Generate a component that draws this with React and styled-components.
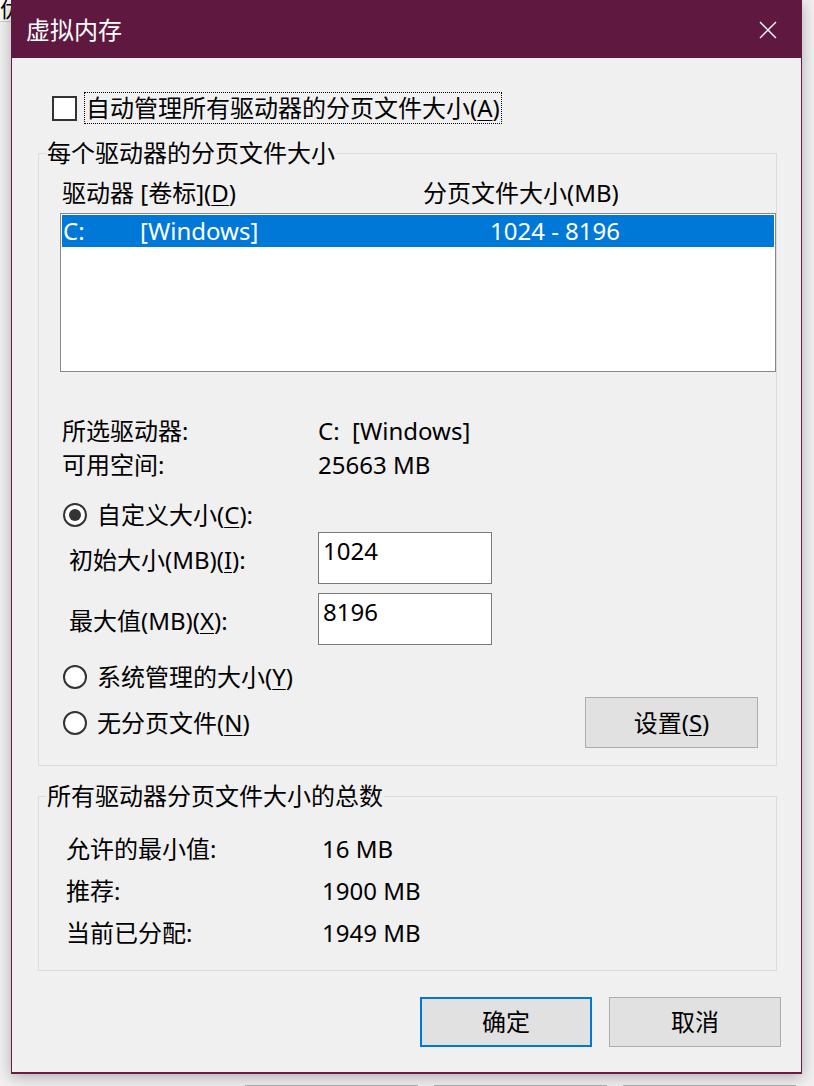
import React from 'react';
import styled, { createGlobalStyle } from 'styled-components';

// --- global ---
const GlobalStyle = createGlobalStyle`
  html, body { margin: 0; padding: 0; }
  body {
    background: #f0f0f0;
    font-family: "Noto Sans", "Noto Sans CJK SC", sans-serif;
    font-size: 24px;
    color: #000;
  }
`;

// --- backdrop (parent window peeking out) ---
const Page = styled.div`
  display: flex;
  width: 814px;
  height: 1086px;
  overflow: hidden;
  background: #f0f0f0;
`;

const BackStrip = styled.div`
  flex: none;
  width: 11px;
  overflow: hidden;
`;

const BackTab = styled.div`
  height: 21px;
  background: #fafafa;
  border-bottom: 1px solid #cccccc;
  font-size: 22px;
  line-height: 16px;
  white-space: nowrap;
  overflow: hidden;
`;

const Column = styled.div`
  display: flex;
  flex-direction: column;
`;

const BackButtons = styled.div`
  display: flex;
  gap: 16px;
  margin-top: 11px;
  padding-left: 234px;
`;

const BackButton = styled.div`
  width: 173px;
  height: 20px;
  box-sizing: border-box;
  border: 1px solid #adadad;
  background: #e1e1e1;
`;

// --- dialog ---
const Dialog = styled.div`
  position: relative;
  width: 791px;
  box-sizing: border-box;
  border: 1px solid #6a1b48;
  border-top: none;
  border-bottom-width: 2px;
  background: #f0f0f0;
  box-shadow: 0 3px 14px rgba(0, 0, 0, 0.28);
`;

const TitleBar = styled.div`
  display: flex;
  align-items: center;
  justify-content: space-between;
  height: 58px;
  margin: 0 -1px;
  padding: 0 25px 0 15px;
  background: #5f1840;
  color: #ffffff;
`;

const Title = styled.span`
  font-size: 24px;
  line-height: 32px;
  margin-top: 2px;
`;

const CloseIcon = styled.svg`
  display: block;
  width: 18px;
  height: 18px;
  margin-top: 1px;
`;

const Body = styled.div`
  padding: 34px 20px 25px 26px;
`;

const Underline = styled.u`
  text-decoration-thickness: 1px;
  text-underline-offset: 3px;
`;

// checkbox row
const CheckRow = styled.div`
  display: flex;
  align-items: center;
  height: 32px;
  margin-left: 14px;
`;

const CheckBox = styled.span`
  width: 25px;
  height: 25px;
  box-sizing: border-box;
  border: 2px solid #333333;
  background: #ffffff;
`;

const FocusLabel = styled.span`
  margin-left: 7px;
  padding: 0 1px;
  border: 1px dotted #000;
  line-height: 30px;
  white-space: nowrap;
`;

// group box
const Group = styled.fieldset`
  margin: ${p => p.$top}px 4px 0 0;
  padding: 0 0 ${p => p.$bottom}px 0;
  border: 1px solid #dcdcdc;
  min-width: 0;
`;

const Legend = styled.legend`
  margin-left: 7px;
  padding: 0 1px;
  line-height: 32px;
`;

const ColumnHeads = styled.div`
  display: grid;
  grid-template-columns: 361px auto;
  margin-top: 8px;
  padding-left: 23px;
  line-height: 32px;
`;

const ListBox = styled.div`
  height: 159px;
  box-sizing: border-box;
  margin: 4px 0 0 21px;
  padding: 1px;
  border: 1px solid #828790;
  background: #ffffff;
`;

const ListRow = styled.div`
  display: grid;
  grid-template-columns: 77px 350px auto;
  height: 32px;
  padding-left: 1px;
  line-height: 32px;
  background: ${p => (p.$selected ? '#0078d7' : 'transparent')};
  color: ${p => (p.$selected ? '#ffffff' : '#000000')};
  white-space: pre;
`;

const InfoGrid = styled.div`
  display: grid;
  grid-template-columns: ${p => p.$label}px auto;
  margin-top: ${p => p.$top}px;
  padding-left: ${p => p.$left}px;
  line-height: ${p => p.$line}px;
  white-space: pre;
`;

const RadioRow = styled.div`
  display: flex;
  align-items: center;
  justify-content: space-between;
  height: ${p => p.$height || 32}px;
  margin-top: ${p => p.$top}px;
  padding-left: 24px;
`;

const RadioLabel = styled.span`
  display: flex;
  align-items: center;
  gap: 10px;
  line-height: 32px;
`;

const RadioCircle = styled.span`
  display: flex;
  align-items: center;
  justify-content: center;
  width: 24px;
  height: 24px;
  box-sizing: border-box;
  border: 2px solid #333333;
  border-radius: 50%;
  background: #ffffff;

  &::after {
    content: '';
    width: 12px;
    height: 12px;
    border-radius: 50%;
    background: #333333;
    display: ${p => (p.$checked ? 'block' : 'none')};
  }
`;

const FieldRow = styled.div`
  display: grid;
  grid-template-columns: 249px 174px;
  align-items: center;
  margin-top: ${p => p.$top}px;
  padding-left: 30px;
`;

const TextBox = styled.div`
  height: 52px;
  box-sizing: border-box;
  padding: 2px 4px;
  border: 1px solid #7a7a7a;
  background: #ffffff;
  line-height: 32px;
`;

const Button = styled.div`
  display: flex;
  align-items: center;
  justify-content: center;
  width: ${p => p.$width}px;
  height: ${p => p.$height}px;
  box-sizing: border-box;
  margin-right: ${p => p.$right || 0}px;
  border: ${p => (p.$default ? '2px solid #0078d7' : '1px solid #adadad')};
  background: #e1e1e1;
  line-height: 32px;
`;

const ButtonRow = styled.div`
  display: flex;
  justify-content: flex-end;
  gap: 17px;
  margin-top: 26px;
`;

const totals = [
  ['允许的最小值:', '16 MB'],
  ['推荐:', '1900 MB'],
  ['当前已分配:', '1949 MB'],
];

export default function App() {
  return (
    <>
      <GlobalStyle />
      <Page>
        <BackStrip>
          <BackTab>优</BackTab>
        </BackStrip>
        <Column>
          <Dialog>
            <TitleBar>
              <Title>虚拟内存</Title>
              <CloseIcon viewBox="0 0 18 18">
                <path d="M1 1 L17 17 M17 1 L1 17" stroke="#ffffff" strokeWidth="1.4" fill="none" />
              </CloseIcon>
            </TitleBar>
            <Body>
              <CheckRow>
                <CheckBox />
                <FocusLabel>
                  自动管理所有驱动器的分页文件大小(<Underline>A</Underline>)
                </FocusLabel>
              </CheckRow>

              <Group $top={13} $bottom={17}>
                <Legend>每个驱动器的分页文件大小</Legend>
                <ColumnHeads>
                  <span>驱动器 [卷标](<Underline>D</Underline>)</span>
                  <span>分页文件大小(MB)</span>
                </ColumnHeads>
                <ListBox>
                  <ListRow $selected>
                    <span>C:</span>
                    <span>[Windows]</span>
                    <span>1024 - 8196</span>
                  </ListRow>
                </ListBox>

                <InfoGrid $label={256} $top={42} $left={23} $line={34}>
                  <span>所选驱动器:</span>
                  <span>C:  [Windows]</span>
                  <span>可用空间:</span>
                  <span>25663 MB</span>
                </InfoGrid>

                <RadioRow $top={17}>
                  <RadioLabel>
                    <RadioCircle $checked />
                    <span>自定义大小(<Underline>C</Underline>):</span>
                  </RadioLabel>
                </RadioRow>
                <FieldRow $top={1}>
                  <span>初始大小(MB)(<Underline>I</Underline>):</span>
                  <TextBox>1024</TextBox>
                </FieldRow>
                <FieldRow $top={9}>
                  <span>最大值(MB)(<Underline>X</Underline>):</span>
                  <TextBox>8196</TextBox>
                </FieldRow>
                <RadioRow $top={16}>
                  <RadioLabel>
                    <RadioCircle />
                    <span>系统管理的大小(<Underline>Y</Underline>)</span>
                  </RadioLabel>
                </RadioRow>
                <RadioRow $top={4} $height={51}>
                  <RadioLabel>
                    <RadioCircle />
                    <span>无分页文件(<Underline>N</Underline>)</span>
                  </RadioLabel>
                  <Button $width={173} $height={51} $right={18}>
                    <span>设置(<Underline>S</Underline>)</span>
                  </Button>
                </RadioRow>
              </Group>

              <Group $top={14} $bottom={16}>
                <Legend>所有驱动器分页文件大小的总数</Legend>
                <InfoGrid $label={256} $top={16} $left={27} $line={42}>
                  {totals.map(([label, value]) => (
                    <React.Fragment key={label}>
                      <span>{label}</span>
                      <span>{value}</span>
                    </React.Fragment>
                  ))}
                </InfoGrid>
              </Group>

              <ButtonRow>
                <Button $width={172} $height={50} $default>确定</Button>
                <Button $width={172} $height={50}>取消</Button>
              </ButtonRow>
            </Body>
          </Dialog>
          <BackButtons>
            <BackButton />
            <BackButton />
            <BackButton />
          </BackButtons>
        </Column>
      </Page>
    </>
  );
}
